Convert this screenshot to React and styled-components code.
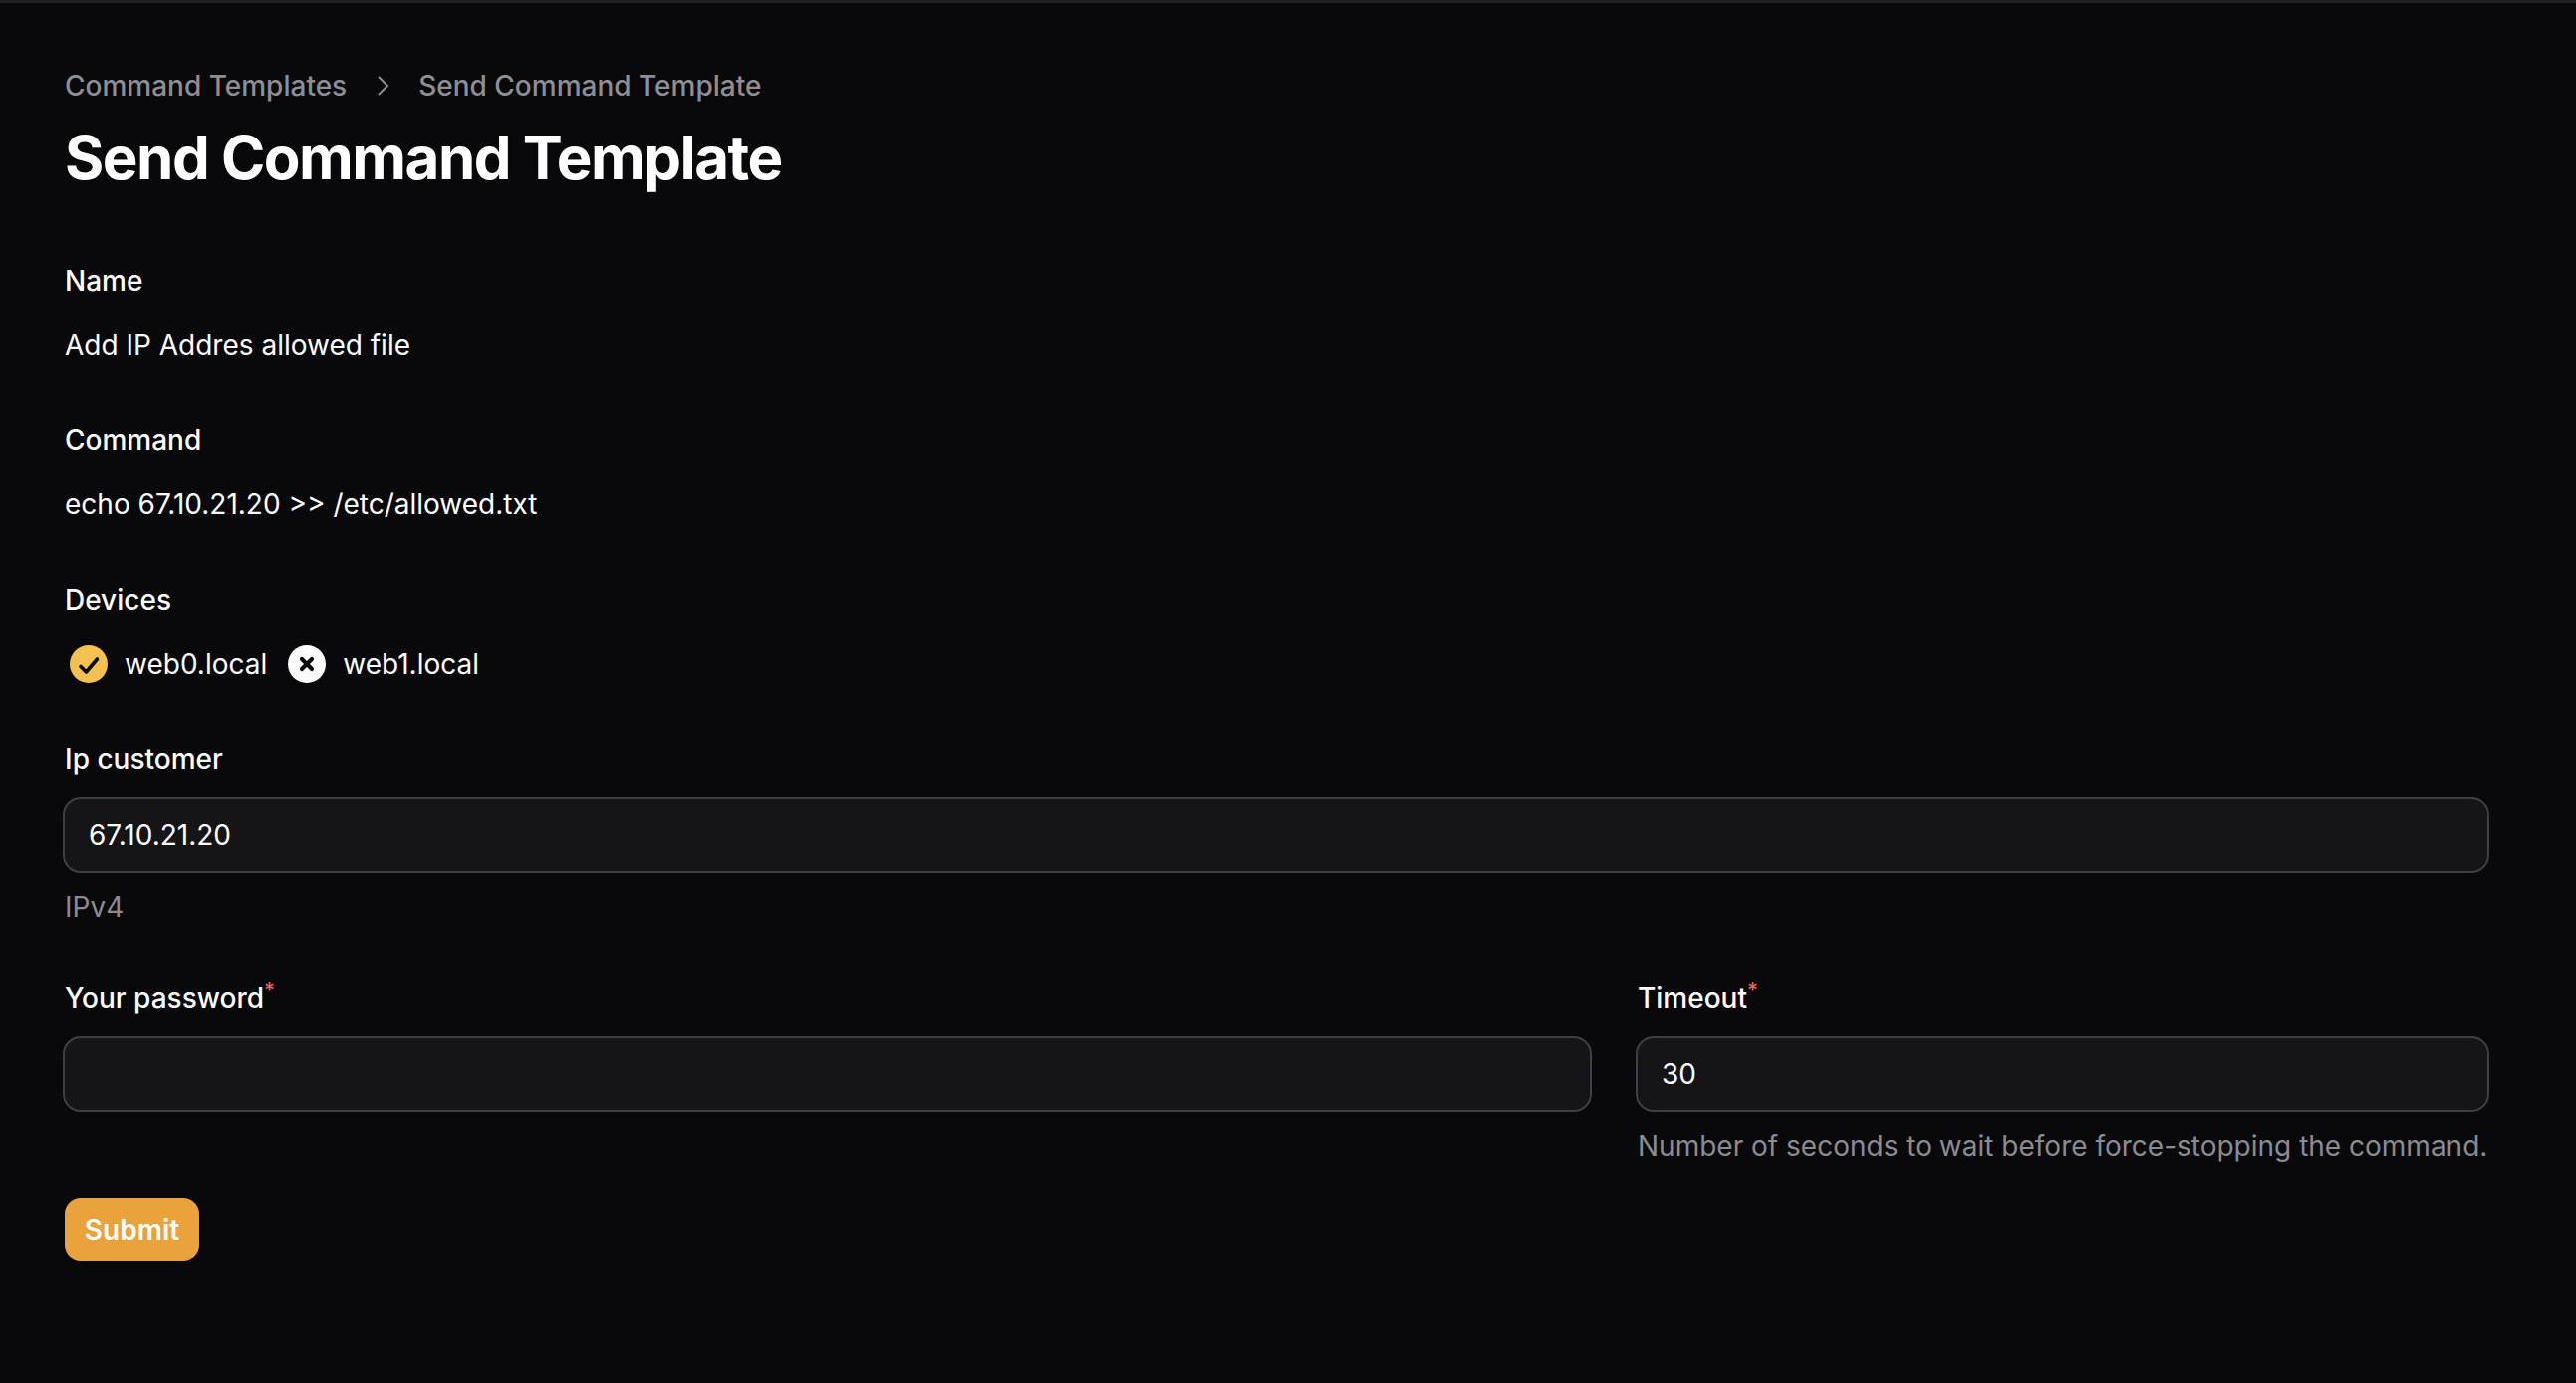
import React from 'react';
import styled, { createGlobalStyle } from 'styled-components';

const Global = createGlobalStyle`
  html, body {
    margin: 0;
    padding: 0;
    background: #09090b;
  }
  * { box-sizing: border-box; }
`;

const Page = styled.div`
  min-height: 1388px;
  background: #09090b;
  border-top: 3px solid #1f1f22;
  padding: 63px 87px 0 65px;
  color: #fff;
  font-family: Inter, "Liberation Sans", sans-serif;
  font-size: 28px;
  line-height: 40px;
`;

const Breadcrumbs = styled.nav`
  display: flex;
  align-items: center;
  gap: 28px;
  color: #8e8e95;
  font-weight: 500;
`;

const Title = styled.h1`
  margin: 16px 0 68px;
  font-size: 60px;
  line-height: 72px;
  font-weight: 700;
  letter-spacing: -1.5px;
`;

const Form = styled.div`
  display: flex;
  flex-direction: column;
`;

const Group = styled.div`
  margin-bottom: ${(p) => p.$after || 56}px;
`;

const Label = styled.div`
  font-weight: 500;
  margin-bottom: ${(p) => p.$after || 18}px;
`;

const Star = styled.sup`
  color: #e5646a;
  font-size: 21px;
  line-height: 0;
`;

const Value = styled.div`
  font-weight: 400;
`;

const Devices = styled.div`
  display: flex;
  align-items: center;
  gap: 21px;
  padding-left: 5px;
`;

const Device = styled.div`
  display: flex;
  align-items: center;
  gap: 17px;
`;

const Input = styled.div`
  height: 76px;
  margin-left: -2px;
  padding: 0 24px;
  display: flex;
  align-items: center;
  background: #151517;
  border: 2px solid #3f3f43;
  border-radius: 18px;
`;

const Hint = styled.div`
  margin-top: 14px;
  color: #8b8b92;
`;

const Columns = styled.div`
  display: grid;
  grid-template-columns: 1533px 855px;
  column-gap: 46px;
  margin-bottom: 32px;
`;

const Submit = styled.button`
  align-self: flex-start;
  width: 135px;
  height: 64px;
  padding: 0;
  border: 0;
  border-radius: 16px;
  background: #eaa23c;
  color: #fff;
  font: 600 28px/40px Inter, "Liberation Sans", sans-serif;
`;

const Chevron = () => (
  <svg width="16" height="24" viewBox="0 0 16 24" fill="none" stroke="#8e8e95" strokeWidth="2">
    <path d="M4 3l9 9-9 9" />
  </svg>
);

const CheckIcon = () => (
  <svg width="38" height="38" viewBox="0 0 38 38">
    <circle cx="19" cy="19" r="19" fill="#f3c14f" />
    <path d="M11 21.5l5.5 5.5 11-13" fill="none" stroke="#09090b" strokeWidth="3.6" strokeLinecap="round" strokeLinejoin="round" />
  </svg>
);

const CrossIcon = () => (
  <svg width="38" height="38" viewBox="0 0 38 38">
    <circle cx="19" cy="19" r="19" fill="#fff" />
    <path d="M14 14l10 10M24 14l-10 10" fill="none" stroke="#09090b" strokeWidth="4.2" strokeLinecap="round" />
  </svg>
);

export default function App() {
  return (
    <Page>
      <Global />
      <Breadcrumbs>
        <span>Command Templates</span>
        <Chevron />
        <span>Send Command Template</span>
      </Breadcrumbs>
      <Title>Send Command Template</Title>
      <Form>
        <Group>
          <Label $after={24}>Name</Label>
          <Value>Add IP Addres allowed file</Value>
        </Group>
        <Group>
          <Label $after={24}>Command</Label>
          <Value>echo 67.10.21.20 &gt;&gt; /etc/allowed.txt</Value>
        </Group>
        <Group>
          <Label $after={24}>Devices</Label>
          <Devices>
            <Device>
              <CheckIcon />
              <span>web0.local</span>
            </Device>
            <Device>
              <CrossIcon />
              <span>web1.local</span>
            </Device>
          </Devices>
        </Group>
        <Group $after={52}>
          <Label>Ip customer</Label>
          <Input>67.10.21.20</Input>
          <Hint>IPv4</Hint>
        </Group>
        <Columns>
          <div>
            <Label>
              Your password<Star>*</Star>
            </Label>
            <Input />
          </div>
          <div>
            <Label>
              Timeout<Star>*</Star>
            </Label>
            <Input>30</Input>
            <Hint>Number of seconds to wait before force-stopping the command.</Hint>
          </div>
        </Columns>
        <Submit>Submit</Submit>
      </Form>
    </Page>
  );
}
